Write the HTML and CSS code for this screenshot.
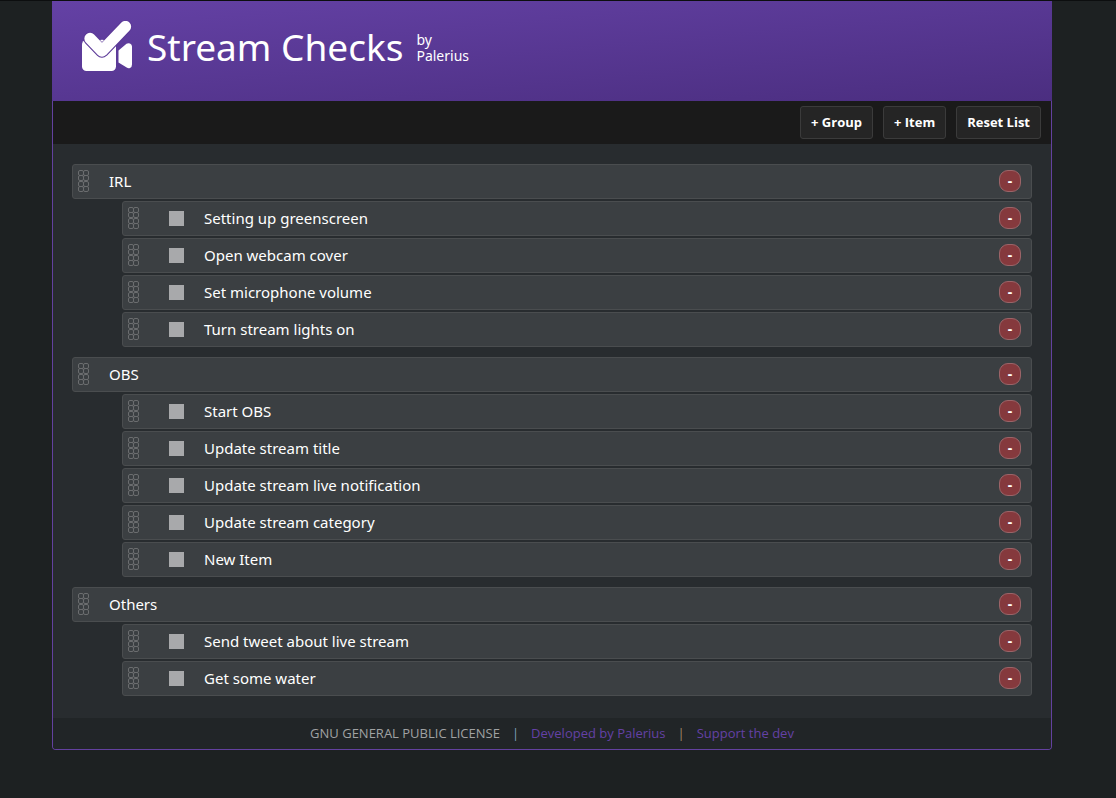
FILE: index.html
```
<!DOCTYPE html>
<html lang="en">
<head>
<meta charset="utf-8">
<title>Stream Checks</title>
<link rel="stylesheet" href="styles.css">
</head>
<body>
<svg class="defs" aria-hidden="true">
  <symbol id="grip" viewBox="0 0 11 22">
    <g fill="none" stroke="#6b6d6f" stroke-width="1">
      <rect x=".5" y=".5" width="5" height="5" rx="1.5"/><rect x="5.5" y=".5" width="5" height="5" rx="1.5"/>
      <rect x=".5" y="5.5" width="5" height="5" rx="1.5"/><rect x="5.5" y="5.5" width="5" height="5" rx="1.5"/>
      <rect x=".5" y="11.5" width="5" height="5" rx="1.5"/><rect x="5.5" y="11.5" width="5" height="5" rx="1.5"/>
      <rect x=".5" y="16.5" width="5" height="5" rx="1.5"/><rect x="5.5" y="16.5" width="5" height="5" rx="1.5"/>
    </g>
  </symbol>
</svg>
<div class="app">
  <header class="header">
    <svg class="logo" viewBox="0 0 50 50" aria-hidden="true">
      <rect x="0" y="19" width="34" height="31" rx="4.500" fill="#fff"/>
      <path d="M36.500 29.500 44.500 22.700Q46.300 21.800 48 22.600 50 23.600 50 25.500V43.500Q50 46 48 47 46.300 47.600 44.700 46.600L36.500 41.500Z" fill="#fff"/>
      <path d="M8 17.500 20 30 43.500 5.500" fill="none" stroke="#5c3a98" stroke-width="13.500" stroke-linecap="round" stroke-linejoin="round"/>
      <path d="M8 17.500 20 30 43.500 5.500" fill="none" stroke="#fff" stroke-width="11.300" stroke-linecap="round" stroke-linejoin="round"/>
      <path d="M18 19Q20 18.300 22 19L20 21Z" fill="#fff"/>
    </svg>
    <h1 class="title">Stream Checks</h1>
    <p class="byline"><span>by</span><span>Palerius</span></p>
  </header>
  <nav class="toolbar">
    <button class="tool">+ Group</button>
    <button class="tool">+ Item</button>
    <button class="tool">Reset List</button>
  </nav>
  <main class="list">
    <section class="group">
      <div class="row"><svg class="grip"><use href="#grip"/></svg><h2 class="name">IRL</h2><button class="remove">-</button></div>
      <div class="row item"><svg class="grip"><use href="#grip"/></svg><input class="check" type="checkbox" id="i1"><label class="name" for="i1">Setting up greenscreen</label><button class="remove">-</button></div>
      <div class="row item"><svg class="grip"><use href="#grip"/></svg><input class="check" type="checkbox" id="i2"><label class="name" for="i2">Open webcam cover</label><button class="remove">-</button></div>
      <div class="row item"><svg class="grip"><use href="#grip"/></svg><input class="check" type="checkbox" id="i3"><label class="name" for="i3">Set microphone volume</label><button class="remove">-</button></div>
      <div class="row item"><svg class="grip"><use href="#grip"/></svg><input class="check" type="checkbox" id="i4"><label class="name" for="i4">Turn stream lights on</label><button class="remove">-</button></div>
    </section>
    <section class="group">
      <div class="row"><svg class="grip"><use href="#grip"/></svg><h2 class="name">OBS</h2><button class="remove">-</button></div>
      <div class="row item"><svg class="grip"><use href="#grip"/></svg><input class="check" type="checkbox" id="i5"><label class="name" for="i5">Start OBS</label><button class="remove">-</button></div>
      <div class="row item"><svg class="grip"><use href="#grip"/></svg><input class="check" type="checkbox" id="i6"><label class="name" for="i6">Update stream title</label><button class="remove">-</button></div>
      <div class="row item"><svg class="grip"><use href="#grip"/></svg><input class="check" type="checkbox" id="i7"><label class="name" for="i7">Update stream live notification</label><button class="remove">-</button></div>
      <div class="row item"><svg class="grip"><use href="#grip"/></svg><input class="check" type="checkbox" id="i8"><label class="name" for="i8">Update stream category</label><button class="remove">-</button></div>
      <div class="row item"><svg class="grip"><use href="#grip"/></svg><input class="check" type="checkbox" id="i9"><label class="name" for="i9">New Item</label><button class="remove">-</button></div>
    </section>
    <section class="group">
      <div class="row"><svg class="grip"><use href="#grip"/></svg><h2 class="name">Others</h2><button class="remove">-</button></div>
      <div class="row item"><svg class="grip"><use href="#grip"/></svg><input class="check" type="checkbox" id="i10"><label class="name" for="i10">Send tweet about live stream</label><button class="remove">-</button></div>
      <div class="row item"><svg class="grip"><use href="#grip"/></svg><input class="check" type="checkbox" id="i11"><label class="name" for="i11">Get some water</label><button class="remove">-</button></div>
    </section>
  </main>
  <footer class="footer">
    <span>GNU GENERAL PUBLIC LICENSE</span>
    <span class="bar first">|</span>
    <a class="link" href="#dev">Developed by Palerius</a>
    <span class="bar">|</span>
    <a class="link" href="#support">Support the dev</a>
  </footer>
</div>
</body>
</html>
```
FILE: styles.css
```
* {
  box-sizing: border-box;
}

body {
  margin: 0;
  padding-right: 12px;
  border-top: 1px solid #0c0e0f;
  background: #1d2122;
  color: #fff;
  font-family: "Segoe UI", "Noto Sans", sans-serif;
  font-size: 15px;
  line-height: 20px;
}

.defs {
  display: none;
}

.app {
  max-width: 1000px;
  margin: 0 auto;
  border: 1px solid #63419f;
  border-top: 0;
  border-radius: 0 0 4px 4px;
}

.header {
  display: flex;
  align-items: center;
  height: 100px;
  margin: 0 -1px;
  padding: 0 30px 10px;
  background: linear-gradient(175deg, #6441a5, #4b2e80);
}

.logo {
  width: 50px;
  height: 50px;
  margin-right: 15px;
}

.title {
  margin: 0;
  padding-top: 2px;
  font-size: 37px;
  font-weight: 400;
  line-height: 50px;
}

.byline {
  display: flex;
  flex-direction: column;
  margin: 0 0 0 13px;
  padding-top: 4px;
  font-size: 14px;
  line-height: 16px;
}

.toolbar {
  display: flex;
  justify-content: flex-end;
  gap: 10px;
  padding: 5px 10px;
  background: #1a1a1a;
}

.tool {
  height: 33px;
  padding: 0 10px 2px;
  border: 1px solid #3b3b3b;
  border-radius: 3px;
  background: #252525;
  color: #fff;
  font: 700 13px "Segoe UI", "Open Sans", sans-serif;
}

.list {
  display: flex;
  flex-direction: column;
  gap: 10px;
  padding: 20px 19px 22px;
  background: #282c2f;
}

.group {
  display: flex;
  flex-direction: column;
  gap: 2px;
}

.row {
  display: flex;
  align-items: center;
  height: 35px;
  padding: 0 10px 1px 5px;
  border: 1px solid #4a4d4f;
  border-radius: 3px;
  background: #3b3f42;
}

.item {
  margin-left: 50px;
}

.grip {
  width: 11px;
  height: 22px;
  margin-right: 20px;
}

.item .grip {
  margin-right: 30px;
}

.check {
  appearance: none;
  width: 15px;
  height: 15px;
  margin: 0 20px 0 0;
  background: #a8a9ab;
}

.check:checked {
  background: #6441a5;
}

.name {
  flex: 1;
  margin: 0;
  font-size: 15px;
  font-weight: 400;
}

.remove {
  width: 22px;
  height: 22px;
  padding: 0;
  border: 1px solid #9b6468;
  border-radius: 9px;
  background: #85393d;
  color: #fff;
  font: 700 14px/18px "Segoe UI", "Noto Sans", sans-serif;
}

.footer {
  display: flex;
  justify-content: center;
  gap: 12px;
  padding: 5px 0 6px;
  border-radius: 0 0 3px 3px;
  background: #212527;
  color: #a0a2a3;
  font-family: "Segoe UI", "Open Sans", sans-serif;
  font-size: 13px;
}

.bar {
  color: #a58a68;
}

.bar.first {
  color: #7fa3b8;
}

.link {
  color: #6441a5;
  text-decoration: none;
}
```
